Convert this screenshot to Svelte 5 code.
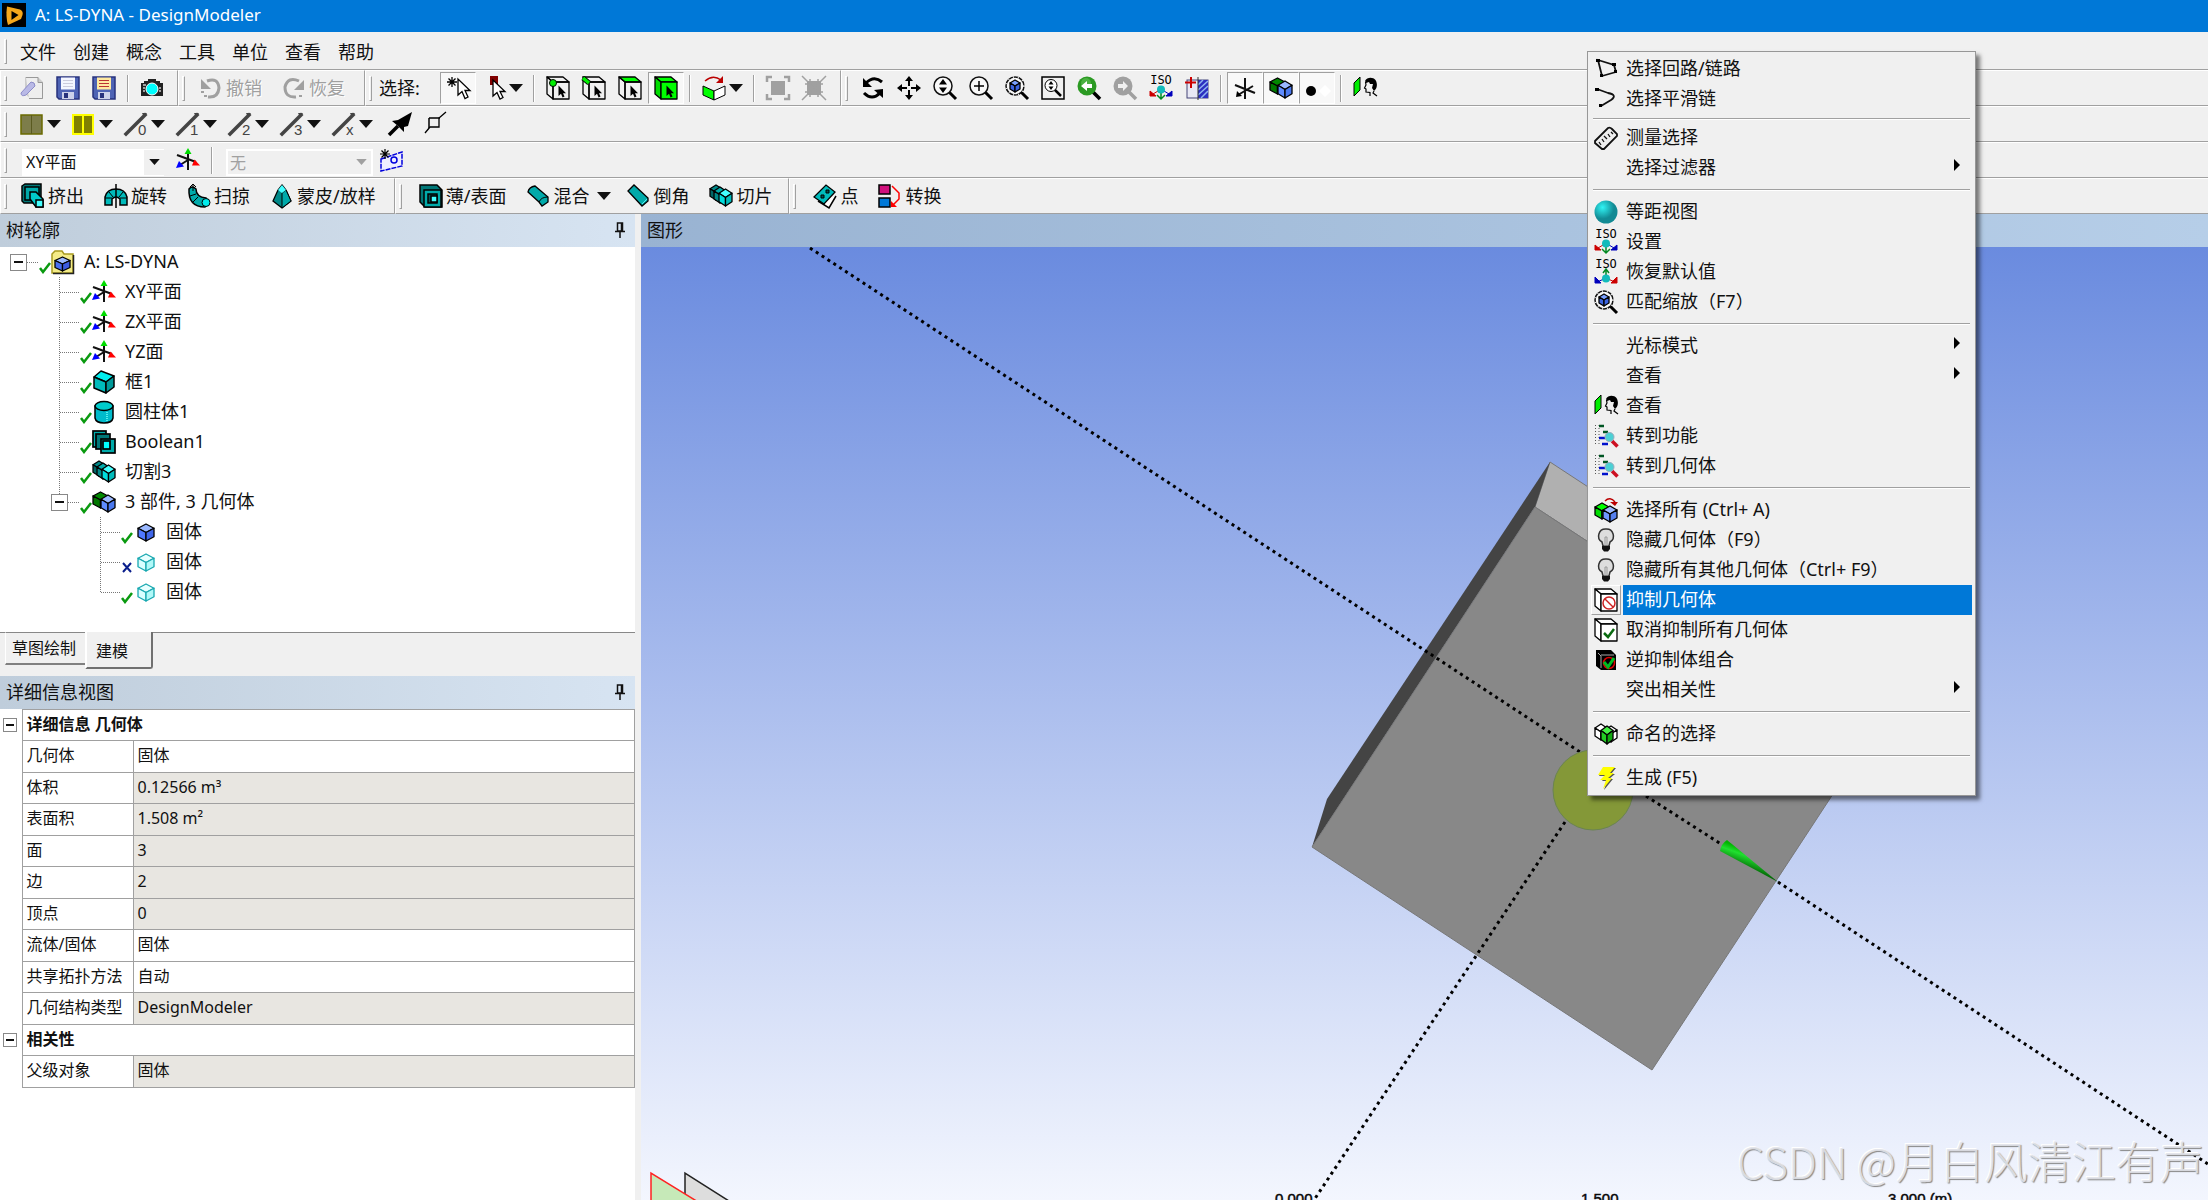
<script lang="ts">
  type Tool = { t: string; icon?: string; text?: string; on?: boolean; off?: boolean; n?: number; tip?: string }

  /** svg helpers */
  const cube = (x: number, y: number, w: number, h: number, top: string, left: string, right: string, line = '#000', sw = 1.3) => {
    const m = x + w / 2, r = x + w, a = y + h / 4, b = y + (h * 3) / 4, c = y + h / 2
    return `<g stroke="${line}" stroke-width="${sw}" stroke-linejoin="round">
      <path d="M${m} ${y}L${r} ${a}L${m} ${c}L${x} ${a}Z" fill="${top}"/>
      <path d="M${x} ${a}L${m} ${c}V${y + h}L${x} ${b}Z" fill="${left}"/>
      <path d="M${r} ${a}L${m} ${c}V${y + h}L${r} ${b}Z" fill="${right}"/></g>`
  }
  const box = (top: string, side: string, front: string) => `<g stroke="#000" stroke-width="1.300" stroke-linejoin="round">
    <path d="M1 1H17L23 6H7Z" fill="${top}"/><path d="M1 1L7 6V23L1 18Z" fill="${side}"/>
    <path d="M7 6H23V23H7Z" fill="${front}"/></g>`
  const cursor = '<path d="M12.500 9.500V20L15 17.800L16.600 21.500L18.500 20.600L17 17.200H20Z"/>'
  const lens = '<circle cx="10" cy="10" r="9" fill="#fff" fill-opacity=".6" stroke="#111" stroke-width="1.500"/><path d="M16.500 16.500L23 23" stroke="#000" stroke-width="3"/>'
  const axes = `<path d="M1 7L20 14M12 5V22M12 12L4 17" stroke="#111" stroke-width="2"/>
    <path d="M12 0L15.500 6H8.500Z" fill="#0d0"/><path d="M24 17.500H16L18.500 11.500Z" fill="#f00"/><path d="M0 20L3 13L8 18.500Z" fill="#00f"/>`
  const floppy = (line: string, paper: string) => `<path d="M1 1H23V23H3L1 21Z" fill="#4e63b4" stroke="#27327c" stroke-width="1.500"/>
    <rect x="5" y="1.500" width="14" height="12" fill="${paper}"/><path d="M7 4.500H17M7 7.500H17M7 10.500H17" stroke="${line}"/>
    <rect x="6" y="16" width="12" height="7" fill="#ccd2ea"/><rect x="8" y="17" width="4" height="5" fill="#27327c"/>`
  const slash = (n: string) => `<path d="M2 22L21 3" stroke="#444" stroke-width="3.500" stroke-linecap="square"/><path d="M18 1H23L20 5Z" fill="#444"/>
    <text x="14" y="23" font-size="15" font-family="Liberation Sans" fill="#444">${n}</text>`
  const iso = (up: boolean) => `<text x="12" y="8" font-size="12" text-anchor="middle" font-family="DejaVu Sans Mono">ISO</text>` + (up
    ? `<path d="M12 19V10M9 13L12 9L15 13" stroke="#082" stroke-width="1.500" fill="none"/><path d="M10 19L3 22M1 17V23H7Z" stroke="#00b" fill="#00b"/><path d="M14 19L21 22M23 17V23H17Z" stroke="#c00" fill="#c00"/><circle cx="12" cy="18.500" r="4" fill="#1bb"/>`
    : `<path d="M12 15V23M8 19L12 23L16 19" stroke="#082" stroke-width="1.500" fill="none"/><path d="M9 15L4 18M1 15V20H7Z" stroke="#c00" fill="#c00"/><path d="M15 15L20 18M23 15V20H17Z" stroke="#00b" fill="#00b"/><circle cx="12" cy="13.500" r="4" fill="#1bb"/>`)
  const head = `<path d="M1 7L7 1V14L1 20Z" fill="#0e0" stroke="#000"/>
    <path d="M12 5C14 1 20 1 22.500 4C25 8 24 13 21 15L19 12L20 8L17 8L16 6L13 7Z"/>
    <path d="M12.500 6L13 9L11.500 12L13 13V16L17 16.500V20M21 15L20 17L24 20" fill="none" stroke="#000" stroke-width="1.200"/>`
  const bulb = `<path d="M12 1A7 7 0 0 0 8 14L9 18H15L16 14A7 7 0 0 0 12 1Z" fill="#ddd" stroke="#333" stroke-width="1.500"/>
    <path d="M11 18V9H13V18" fill="none" stroke="#999"/><path d="M8 18H16V21L14 23.500H10L8 21Z" fill="#111"/>`
  const goTo = `<path d="M1.500 1V22M5 1V22" stroke="#555" stroke-dasharray="1 2"/><path d="M5 2H10M9 8H14" stroke="#052" stroke-width="2.500"/>
    <path d="M5 14H11M8 20H14" stroke="#01c" stroke-width="2.500"/><path d="M18 17L23.500 22.500" stroke="#c12" stroke-width="3.500"/><circle cx="15.500" cy="13" r="4.500" fill="#4cd0d4" stroke="#9ab"/>`
  const slices = cube(1, 1, 12, 15, '#088', '#066', '#066') + cube(5, 3, 12, 16, '#0aa', '#088', '#088') + cube(10, 5, 13, 17, '#4ff', '#0dd', '#0bb')

  const icons: Record<string, string> = {
    app: '<rect width="24" height="24"/><path d="M5 3.500L18 6.500Q21.500 8 20.500 12L19 16L6 22Q3.500 14 5 3.500Z" fill="#f5a81c"/><path d="M9.500 8L16.500 12L9.500 17Z" fill="#000"/>',
    fresh: '<path d="M5 1H18L23 6V23H11L5 18Z" fill="#ccc"/><path d="M6 1.500H18V6.500H22.500V22.500H9" fill="#eee" stroke="#999"/><path d="M1 17L11 6Q15 6 15 10L6 19Q1 21 1 17Z" fill="#b9b9e6" stroke="#8c8cc8"/>',
    save: floppy('#ccd', '#f4f6ff'),
    saveAll: floppy('#b33', '#ffe9a0'),
    camera: '<path d="M4 5H8V3H16V5H20V7H23V20H1V7H4Z" fill="#222"/><path d="M3 9H6M3 12H5M3 15H5M19 12H21M19 15H21" stroke="#ccc" stroke-width="1.500"/><circle cx="12" cy="13" r="6" fill="#0ff" stroke="#fff"/>',
    undo: '<path d="M8 5Q19 1 20 12Q19 22 9 21" fill="none" stroke="#a0a0a0" stroke-width="3"/><path d="M2 3V13H12Z" fill="#a0a0a0"/><path d="M2 16H5M5 20H8" stroke="#a0a0a0" stroke-width="2"/>',
    redo: '<path d="M17 5Q6 0 3 11Q3 22 14 21" fill="none" stroke="#a0a0a0" stroke-width="3"/><path d="M22 4V14H12Z" fill="#a0a0a0"/><path d="M17 20H20" stroke="#a0a0a0" stroke-width="2"/>',
    pick: '<path d="M6 1V11M1 6H11M2.500 2.500L9.500 9.500M9.500 2.500L2.500 9.500" stroke="#000" stroke-width="1.300"/><path d="M12 3V19L16 15.500L19 22.500L22 21L19 14.500H24Z" fill="#fff" stroke="#000" stroke-width="1.300"/>',
    pickMode: '<rect x="8" y="0" width="8" height="9" fill="#800000"/><path d="M11 4V20L15 16.500L18 23L21 21.500L18 15.500H23Z" fill="#fff" stroke="#000" stroke-width="1.300"/>',
    vertex: box('none', 'none', 'none') + '<circle cx="7" cy="7" r="3.500" fill="#0e0" stroke="#000"/>' + cursor,
    edge: box('none', 'none', 'none') + '<path d="M1 2L7 7" stroke="#000" stroke-width="5"/><path d="M1 2L7 7" stroke="#0e0" stroke-width="3.500"/>' + cursor,
    face: box('#0f0', 'none', 'none') + cursor,
    body: box('#0f0', '#0d0', '#0f0') + cursor,
    extend: '<path d="M3 5Q11 -2 19 4" fill="none" stroke="#b00" stroke-width="1.500"/><path d="M21 0V7H14Z" fill="#b00"/><path d="M1 10L12 15V24L1 19Z" fill="#0f0" stroke="#000"/><path d="M23 10L12 15V24L23 19Z" fill="#fff" stroke="#000"/>',
    grow: '<rect x="5" y="5" width="14" height="14" fill="#a0a0a0"/><path d="M1 6V1H6M18 1H23V6M23 18V23H18M6 23H1V18" fill="none" stroke="#a0a0a0" stroke-width="2.500"/>',
    shrink: '<rect x="5" y="5" width="14" height="14" fill="#a0a0a0"/><path d="M0 0L24 24M24 0L0 24M8 3V21M16 3V21M3 8H21M3 16H21" stroke="#a0a0a0" stroke-width="1.500"/>',
    rotate: '<path d="M5 7Q13 -1 21 6M3 17Q11 25 19 17" fill="none" stroke="#000" stroke-width="3"/><path d="M2 2V11H11Z"/><path d="M22 13V22L13 14Z"/>',
    pan: '<path d="M12 3V10M12 14V21M3 12H10M14 12H21" stroke="#000" stroke-width="2"/><path d="M12 0L16 5H8ZM12 24L16 19H8ZM0 12L5 8V16ZM24 12L19 8V16Z"/>',
    zoom: lens + '<path d="M10 3L14 8.500H6ZM10 17L14 11.500H6Z"/>',
    zoomIn: lens + '<path d="M10 5V15M5 10H15" stroke="#000" stroke-width="1.500"/>',
    fit: lens + '<circle cx="10" cy="10" r="9" fill="none" stroke="#f0f0f0" stroke-width="1.500" stroke-dasharray="1 4"/>' + cube(5, 4, 10, 12, '#7aa0ff', '#3c64e0', '#3c64e0'),
    zoomBox: '<rect x="1" y="1" width="22" height="22" fill="none" stroke="#000" stroke-width="1.500"/><circle cx="10" cy="9.500" r="6" fill="#fff" stroke="#000"/><path d="M14 14L20 20" stroke="#000" stroke-width="2.500"/><path d="M10 5L12.500 8.500H7.500ZM10 14L12.500 10.500H7.500Z"/>',
    prev: '<path d="M16 16L23 23" stroke="#000" stroke-width="3.500"/><circle cx="10" cy="10" r="9.500" fill="#2b9a22"/><circle cx="9" cy="7" r="5" fill="#6cc860" fill-opacity=".5"/><path d="M15 8H10V5L4 10L10 15V12H15Z" fill="#fff"/>',
    next: '<circle cx="10" cy="10" r="9.500" fill="#a0a0a0"/><path d="M16 16L23 23" stroke="#a0a0a0" stroke-width="3.500"/><path d="M5 8H10V5L15 10L10 15V12H5Z" fill="#f0f0f0"/>',
    iso: iso(false),
    isoUp: iso(true),
    plane: '<rect x="2" y="4" width="21" height="18" fill="#e8e8f4" stroke="#447"/><path d="M13 4H23V22H13Z" fill="#2c30c0"/><path d="M13 9L18 4M13 14L23 5M13 19L23 10M16 22L23 15" stroke="#8fb4f0" stroke-width="1.500"/><path d="M13 1V24" stroke="#333"/><path d="M6 1V12M0 6.500H11" stroke="#c00" stroke-width="2"/>',
    triad: '<path d="M2 9L22 17M12 2V23M20 10L5 19" stroke="#111" stroke-width="2"/><path d="M3 21L4 15L9 20Z"/>',
    parts: cube(1, 2, 15, 16, '#080', '#070', '#060') + cube(9, 5, 14, 17, '#9ab8ff', '#5f8cff', '#4a78ee'),
    dots: '<circle cx="6" cy="15" r="5"/><path d="M20 9L26 15L20 21L14 15Z" fill="#fff"/>',
    look: head,
    plates: '<rect x="1" y="3" width="21" height="19" fill="#7d7d4a" stroke="#6a6a00" stroke-width="1.500"/><path d="M11.500 3V22" stroke="#5a5a20"/>',
    platesLit: '<rect x="1" y="3" width="20" height="19" fill="#808000" stroke="#ff0" stroke-width="2"/><path d="M11 3V22" stroke="#ff0" stroke-width="2"/>',
    l0: slash('0'), l1: slash('1'), l2: slash('2'), l3: slash('3'), lx: slash('x'),
    spear: '<path d="M1 23L10 14" stroke="#000" stroke-width="3.500"/><path d="M24 0L20 14L16 15L16 20L10 14L4 9L10 8Z"/>',
    tag: '<path d="M1 21L6 15H15V6L22 0" fill="none" stroke="#000" stroke-width="1.300"/><path d="M5 6H16M5 6V16" stroke="#000" stroke-width="1.500"/>',
    axes,
    sketch: '<path d="M2 11L23 4V18L2 23Z" fill="#eef" stroke="#00d" stroke-width="1.500" stroke-dasharray="5 1"/><circle cx="15" cy="12" r="3" fill="none" stroke="#00d" stroke-width="1.500"/><path d="M6 1V11M1 6H11M2.500 2.500L9.500 9.500M9.500 2.500L2.500 9.500" stroke="#000" stroke-width="1.200"/>',
    extrude: '<g stroke="#000" stroke-width="1.500"><path d="M1 2L4 0H20V16L17 19H3L1 17Z" fill="#077"/><rect x="4" y="3" width="14" height="13" fill="#0aa"/><path d="M9 8H15L22 15V23H15L9 15Z" fill="#0cc"/><rect x="15" y="16" width="7" height="7" fill="#4ff"/></g>',
    revolve: '<path d="M1 21V13Q3 5 12 5Q21 5 23 13V21H16V15Q12 11 8 15V21Z" fill="#0bb" stroke="#000" stroke-width="1.500"/><path d="M1 14H8M16 14H23M5 8L9 13M19 8L15 13" stroke="#000"/><path d="M12 0V24" stroke="#000" stroke-width="1.500"/>',
    sweep: '<path d="M2 5Q5 1 9 5Q9 13 19 14L22 18L18 23Q1 23 2 5Z" fill="#0aa" stroke="#000" stroke-width="1.500"/><path d="M3 12L9 10M6 18L11 13" stroke="#000"/><circle cx="19" cy="18.500" r="4" fill="#0ee" stroke="#000"/><path d="M6 0V7M3 3L6 0L9 3" fill="none" stroke="#000"/>',
    loft: '<path d="M12 1L16 6L21 17L12 24L3 17L8 6Z" fill="#088" stroke="#000" stroke-width="1.300"/><path d="M12 9V24L21 17L16 6Z" fill="#0aa" stroke="#000"/><path d="M12 1L16 6L12 9L8 6Z" fill="#4ff"/>',
    thin: '<g stroke="#000" stroke-width="1.500"><path d="M1 1H18L23 6V23H6L1 18Z" fill="#077"/><rect x="5" y="6" width="17" height="17" fill="#0aa"/><rect x="9" y="10" width="9" height="9" fill="#055"/><rect x="12" y="12" width="6" height="6" fill="#4ff"/></g>',
    blend: '<path d="M2 8Q3 3 9 2L22 13V18L16 22L13 18Z" fill="#0aa" stroke="#000" stroke-width="1.300"/><path d="M13 18Q15 13 22 13" stroke="#000" fill="none"/>',
    chamfer: '<path d="M2 7L8 1L22 14V17L16 22Z" fill="#0aa" stroke="#000" stroke-width="1.300"/><path d="M16 20L21 15" stroke="#5ee"/>',
    slices,
    point: '<path d="M5 17L16 24L23 12" fill="#fff" stroke="#000" stroke-width="1.500"/><path d="M1 13L13 1L22 8L11 20Z" fill="#0bb" stroke="#000" stroke-width="1.300"/><path d="M8 11H11V14H8ZM13 6H16V9H13Z" fill="#055" stroke="#000"/>',
    convert: '<rect x="1" y="1" width="11" height="9" fill="#d0107c" stroke="#000" stroke-width="1.500"/><rect x="1" y="14" width="11" height="9" fill="#0078d7" stroke="#000" stroke-width="1.500"/><path d="M14 2L21 9V15L15 21" fill="none" stroke="#f00" stroke-width="1.500"/><path d="M13 17V23H19Z" fill="#f00"/>',
    folder: '<path d="M1 4L4 1H11L13 4H22V23H1Z" fill="#f4ec88" stroke="#a89a20" stroke-width="1.500"/><path d="M22.500 5V23.500H2" fill="none" stroke="#222" stroke-width="1.500"/>' + cube(4, 7, 15, 14, '#9ab8ff', '#4a70f0', '#3c5ce0'),
    block: '<g stroke="#000" stroke-width="1.500" stroke-linejoin="round"><path d="M2 7L9 1L22 6L14 12Z" fill="#0ee"/><path d="M2 7L14 12V23L2 18Z" fill="#0bb"/><path d="M14 12L22 6V17L14 23Z" fill="#099"/></g>',
    cylinder: '<path d="M3 6V18Q4 23 12 23Q20 23 21 18V6Z" fill="#0bc" stroke="#000" stroke-width="1.500"/><ellipse cx="12" cy="6" rx="9" ry="4.500" fill="#0cc" stroke="#000" stroke-width="1.500"/><path d="M15 12V21" stroke="#5ee" stroke-width="2" stroke-dasharray="1 1"/>',
    bool: '<g stroke="#000" stroke-width="1.700"><rect x="1" y="1" width="13" height="16" fill="#0aa"/><rect x="4" y="4" width="14" height="15" fill="#077"/><rect x="9" y="9" width="14" height="14" fill="#0aa"/><rect x="11" y="11" width="7" height="8" fill="#0ff"/></g>',
    solid: cube(5, 4, 16, 17, '#9ab8ff', '#5078ff', '#4066e8'),
    ghost: cube(5, 4, 16, 17, '#e8ffff', '#d8ffff', '#b0f8f8', '#18a8b0'),
    loop: '<path d="M4 3L20 8L22 15L8 19Z" fill="none" stroke="#111" stroke-width="1.800"/><path d="M2 2H6V5H2ZM18 6H22V9H18ZM20 13H23V16H20ZM6 17H9V20H6Z"/>',
    chain: '<path d="M3 2L14 6Q24 8 17 13L7 19" fill="none" stroke="#111" stroke-width="1.800"/><path d="M1 1H5V4H1ZM5 17H8V20H5Z"/>',
    ruler: '<path d="M1 15L14 2Q16 1 18 3L23 8V10L10 23H8L1 17Z" fill="#eee" stroke="#111" stroke-width="1.800"/><path d="M7 19L5 16M10 16L8 13M13 13L10 10M16 11L14 8M19 8L17 6" stroke="#111" stroke-width="1.300"/>',
    sphere: '<defs><radialGradient id="ball" cx="35%" cy="30%"><stop offset="0" stop-color="#30f4f4"/><stop offset="1" stop-color="#128a94"/></radialGradient></defs><circle cx="12" cy="12" r="11.500" fill="url(#ball)"/>',
    goTo,
    all: cube(1, 5, 14, 16, '#0f0', '#0d0', '#0b0') + cube(9, 8, 14, 16, '#9ab8ff', '#6f98ff', '#5580f0') + '<path d="M11 3Q16 -2 21 4" fill="none" stroke="#b00" stroke-width="1.500"/><path d="M16 4H24L21 8Z" fill="#b00"/>',
    bulb,
    suppress: box('#fff', '#fff', '#fff') + '<circle cx="15" cy="15" r="6" fill="none" stroke="#c22" stroke-width="1.500"/><path d="M11 11L19 19" stroke="#c22" stroke-width="1.500"/>',
    unsuppress: box('#fff', '#fff', '#fff') + '<path d="M10 15L14 19L20 11" fill="none" stroke="#0a6a10" stroke-width="2.500"/>',
    invert: '<path d="M2 2H17L22 7V22H7L2 18Z"/><path d="M4 5L7 8V20M7 7H20" stroke="#aaa" fill="none"/><circle cx="15" cy="15" r="5.500" fill="none" stroke="#d00" stroke-width="1.500"/><path d="M10 14L14 19L20 10" fill="none" stroke="#0b2" stroke-width="3"/>',
    named: cube(1, 2, 12, 16, '#fff', '#fff', '#fff') + cube(11, 4, 12, 16, '#fff', '#fff', '#fff') + cube(7, 4, 12, 18, '#4e4', '#2c2', '#1a1'),
    bolt: '<path d="M10 2H22L17 8H21L15 13H19L10 24L13 15H8L12 10H5Z" fill="#555"/><path d="M9 1H21L16 7H20L14 12H18L9 23L12 14H6L11 9H4Z" fill="#ff0"/>'
  }

  /** toolbars: rows of bands, each band a list of tools */
  const b = (icon: string, tip: string, on = false): Tool => ({ t: 'btn', icon, tip, on })
  const d = (icon: string, tip: string): Tool => ({ t: 'drop', icon, tip })
  const x = (icon: string, text: string, off = false): Tool => ({ t: 'text', icon, text, off })
  const gap = (n: number): Tool => ({ t: 'gap', n })
  const sep: Tool = { t: 'sep' }

  const menus = ['文件', '创建', '概念', '工具', '单位', '查看', '帮助']
  const mainBands: Tool[][] = [
    [b('fresh', '新建'), b('save', '保存'), b('saveAll', '另存'), sep, b('camera', '图像'), gap(7)],
    [x('undo', '撤销', true), x('redo', '恢复', true), gap(6)],
    [{ t: 'label', text: '选择:' }, b('pick', '新选择', true), d('pickMode', '选择模式'), sep, b('vertex', '点'), b('edge', '边'), b('face', '面'), b('body', '体', true), sep,
      d('extend', '扩展'), sep, b('grow', '放大选择'), b('shrink', '缩小选择'), gap(8)],
    [b('rotate', '旋转'), b('pan', '平移'), b('zoom', '缩放'), b('zoomIn', '放大'), b('fit', '匹配'), b('zoomBox', '窗口'), b('prev', '上一视图'), b('next', '下一视图'), b('iso', '等距'), b('plane', '平面'), sep,
      b('triad', '坐标', true), b('parts', '模型', true), b('dots', '点显示', true), sep, b('look', '查看')]
  ]
  const lineBands: Tool[][] = [
    [d('plates', '面颜色'), d('platesLit', '高亮'), d('l0', '边 0'), d('l1', '边 1'), d('l2', '边 2'), d('l3', '边 3'), d('lx', '边 x'), gap(4), b('spear', '方向'), b('tag', '标记')]
  ]
  const featureBands: Tool[][] = [
    [x('extrude', '挤出'), x('revolve', '旋转'), x('sweep', '扫掠'), x('loft', '蒙皮/放样'), gap(5)],
    [gap(3), x('thin', '薄/表面'), { t: 'textdrop', icon: 'blend', text: '混合' }, x('chamfer', '倒角'), x('slices', '切片'), gap(3)],
    [gap(3), x('point', '点'), x('convert', '转换')]
  ]

  const tree = [
    { level: 0, icon: 'folder', text: 'A: LS-DYNA', open: true },
    { level: 1, icon: 'axes', text: 'XY平面' },
    { level: 1, icon: 'axes', text: 'ZX平面' },
    { level: 1, icon: 'axes', text: 'YZ面' },
    { level: 1, icon: 'block', text: '框1' },
    { level: 1, icon: 'cylinder', text: '圆柱体1' },
    { level: 1, icon: 'bool', text: 'Boolean1' },
    { level: 1, icon: 'slices', text: '切割3' },
    { level: 1, icon: 'parts', text: '3 部件, 3 几何体', open: true },
    { level: 2, icon: 'solid', text: '固体' },
    { level: 2, icon: 'ghost', text: '固体', hidden: true },
    { level: 2, icon: 'ghost', text: '固体', last: true }
  ]

  const details = [
    { group: '详细信息 几何体' },
    { name: '几何体', value: '固体', edit: true },
    { name: '体积', value: '0.12566 m³' },
    { name: '表面积', value: '1.508 m²' },
    { name: '面', value: '3' },
    { name: '边', value: '2' },
    { name: '顶点', value: '0' },
    { name: '流体/固体', value: '固体', edit: true },
    { name: '共享拓扑方法', value: '自动', edit: true },
    { name: '几何结构类型', value: 'DesignModeler' },
    { group: '相关性' },
    { name: '父级对象', value: '固体' }
  ]

  const context = [
    [{ icon: 'loop', text: '选择回路/链路' }, { icon: 'chain', text: '选择平滑链' }],
    [{ icon: 'ruler', text: '测量选择' }, { text: '选择过滤器', sub: true }],
    [{ icon: 'sphere', text: '等距视图' }, { icon: 'iso', text: '设置' }, { icon: 'isoUp', text: '恢复默认值' }, { icon: 'fit', text: '匹配缩放（F7）' }],
    [{ text: '光标模式', sub: true }, { text: '查看', sub: true }, { icon: 'look', text: '查看' }, { icon: 'goTo', text: '转到功能' }, { icon: 'goTo', text: '转到几何体' }],
    [{ icon: 'all', text: '选择所有 (Ctrl+ A)' }, { icon: 'bulb', text: '隐藏几何体（F9）' }, { icon: 'bulb', text: '隐藏所有其他几何体（Ctrl+ F9）' },
      { icon: 'suppress', text: '抑制几何体', hot: true }, { icon: 'unsuppress', text: '取消抑制所有几何体' }, { icon: 'invert', text: '逆抑制体组合' }, { text: '突出相关性', sub: true }],
    [{ icon: 'named', text: '命名的选择' }],
    [{ icon: 'bolt', text: '生成 (F5)' }]
  ] as { icon?: string; text: string; sub?: boolean; hot?: boolean }[][]
</script>

{#snippet ico(name: string)}
  <svg class="ico" viewBox="0 0 24 24" aria-hidden="true">{@html icons[name] ?? ''}</svg>
{/snippet}

{#snippet tri()}
  <svg class="tri" viewBox="0 0 14 8" aria-hidden="true"><path d="M0 0H14L7 8Z" fill="currentColor" /></svg>
{/snippet}

{#snippet pin()}
  <svg class="pin" viewBox="0 0 10 16" aria-hidden="true"><path d="M2.500 1H7.500V9H2.500ZM0 9.500H10M5 9V16M6.500 1V9" fill="none" stroke="#111" stroke-width="1.500" /></svg>
{/snippet}

{#snippet bar(bands: Tool[][])}
  <div class="row">
    {#each bands as tools, i}
      <div class="band" class:rest={i === bands.length - 1}>
        <span class="grip"></span>
        {#each tools as tool}
          {#if tool.t === 'sep'}
            <span class="sep"></span>
          {:else if tool.t === 'gap'}
            <span style="width:{tool.n}px"></span>
          {:else if tool.t === 'label'}
            <span class="label">{tool.text}</span>
          {:else if tool.t === 'btn'}
            <button class="btn" class:on={tool.on} aria-label={tool.tip}>{@render ico(tool.icon ?? '')}</button>
          {:else if tool.t === 'drop'}
            <button class="drop" aria-label={tool.tip}>{@render ico(tool.icon ?? '')}{@render tri()}</button>
          {:else}
            <button class="text" class:wide={tool.t === 'textdrop'} class:off={tool.off}>
              {@render ico(tool.icon ?? '')}<span>{tool.text}</span>
              {#if tool.t === 'textdrop'}{@render tri()}{/if}
            </button>
          {/if}
        {/each}
      </div>
    {/each}
  </div>
{/snippet}

<div class="app">
  <header class="title">{@render ico('app')}<span>A: LS-DYNA - DesignModeler</span></header>

  <nav class="row menubar">
    <span class="grip"></span>
    {#each menus as m}<button>{m}</button>{/each}
  </nav>
  {@render bar(mainBands)}
  {@render bar(lineBands)}
  <div class="row">
    <div class="band rest">
      <span class="grip"></span>
      <span class="combo plane">
        <select aria-label="平面"><option>XY平面</option></select>
        <span class="arrow">{@render tri()}</span>
      </span>
      <button class="btn" aria-label="新平面">{@render ico('axes')}</button>
      <span class="sep"></span>
      <span class="combo none">
        <select aria-label="草图" disabled><option>无</option></select>
        <span class="arrow">{@render tri()}</span>
      </span>
      <button class="btn" aria-label="新草图">{@render ico('sketch')}</button>
    </div>
  </div>
  {@render bar(featureBands)}

  <main>
    <aside>
      <h2>树轮廓{@render pin()}</h2>
      <ul class="tree">
        {#each tree as node}
          <li class="level{node.level}">
            <span class="stem">
              <svg viewBox="0 0 29 30" aria-hidden="true">
                <g stroke="#777" stroke-dasharray="1 1">
                  {#if node.level > 0}<path d="M8.500 0V{node.last || node.open ? 15 : 30}" />{/if}
                  <path d="M9 15.500H29" />
                </g>
              </svg>
              {#if node.open}<button class="fold" aria-label="折叠"></button>{/if}
            </span>
            <svg class="mark" viewBox="0 0 12 12" aria-hidden="true">
              {#if node.hidden}
                <path d="M2 1L10 10M10 1L2 10" stroke="#0a1e8c" stroke-width="2" />
              {:else}
                <path d="M1 6L4 10L11 1" fill="none" stroke="#0a9a10" stroke-width="2.500" />
              {/if}
            </svg>
            {@render ico(node.icon)}
            <span class="name">{node.text}</span>
          </li>
        {/each}
      </ul>
      <div class="tabs">
        <button class="back">草图绘制</button>
        <button class="front">建模</button>
        <span></span>
      </div>
      <h2>详细信息视图{@render pin()}</h2>
      <div class="details">
        <table>
          <colgroup><col class="c-fold" /><col class="c-name" /><col /></colgroup>
          <tbody>
            {#each details as item}
              <tr>
                {#if item.group}
                  <td class="gutter"><button class="fold" aria-label="折叠"></button></td>
                  <th colspan="2" class="group">{item.group}</th>
                {:else}
                  <td class="gutter"></td>
                  <th>{item.name}</th>
                  <td class:fixed={!item.edit}>{item.value}</td>
                {/if}
              </tr>
            {/each}
          </tbody>
        </table>
      </div>
    </aside>

    <section class="graphics">
      <h2>图形</h2>
      <div class="view">
        <svg class="scene" viewBox="0 0 1567 953" preserveAspectRatio="xMidYMid slice">
          <defs>
            <linearGradient id="cone" x1="0.6" y1="0.3" x2="0.4" y2="0.7">
              <stop offset="0" stop-color="#00b400" />
              <stop offset="0.3" stop-color="#20e030" />
              <stop offset="1" stop-color="#005a00" />
            </linearGradient>
          </defs>
          <!-- box -->
          <path d="M909 215L1248 437L1234 483L894 260Z" fill="#b0b0b0" stroke="#777" />
          <path d="M909 215L894 260L671 600L686 552Z" fill="#444" />
          <path d="M894 260L1234 483L1011 823L671 600Z" fill="#888" stroke="#777" />
          <!-- axes -->
          <path class="axis" d="M169 1L939 505M1005 549L1080 597M1137 635L1567 917" />
          <path class="axis" d="M924 575L673 953" />
          <circle cx="952" cy="543" r="40" fill="#849838" stroke="#6b8450" />
          <path d="M1086 593L1137 635L1079 604Q1080 597 1086 593Z" fill="url(#cone)" />
          <!-- section planes -->
          <path d="M44 960V926L110 968" fill="#ddd" stroke="#222" stroke-width="1.500" />
          <path d="M10 960V926L75 966" fill="#c6e9b8" stroke="#f22" stroke-width="1.500" />
          <g class="scale">
            <text x="634" y="957">0.000</text>
            <text x="940" y="957">1.500</text>
            <text x="1247" y="957">3.000 (m)</text>
          </g>
        </svg>
        <div class="watermark"><span>CSDN @</span>月白风清江有声</div>
      </div>
    </section>
  </main>

  <div class="context">
    {#each context as group, g}
      {#if g > 0}<hr class:tight={g === 1} />{/if}
      {#each group as item}
        <button class:hot={item.hot}>
          <span class="cell">{#if item.icon}{@render ico(item.icon)}{/if}</span>
          <span class="caption">{item.text}</span>
          {#if item.sub}<svg class="more" viewBox="0 0 7 18" aria-hidden="true"><path d="M0 0L6 6L0 12Z" /></svg>{/if}
        </button>
      {/each}
    {/each}
  </div>
</div>

<style>
  :global(body) {
    margin: 0;
    background: #f0f0f0;
  }
  .app {
    position: relative;
    display: flex;
    flex-direction: column;
    min-height: 100vh;
    overflow: hidden;
    background: #f0f0f0;
    color: #111;
    font: 18px/24px 'Noto Sans', 'Noto Sans CJK SC', sans-serif;
  }
  button, select {
    margin: 0;
    padding: 0;
    border: 0;
    border-radius: 0;
    background: none;
    color: inherit;
    font: inherit;
  }
  .ico {
    display: block;
    flex: none;
    width: 24px;
    height: 24px;
    overflow: visible;
  }
  .title {
    display: flex;
    align-items: center;
    gap: 9px;
    height: 32px;
    padding: 0 0 3px 2px;
    box-sizing: border-box;
    background: #0078d7;
    color: #fff;
    font-size: 17px;
  }

  /* toolbars */
  .row {
    display: flex;
    height: 36px;
    white-space: nowrap;
  }
  .band {
    display: flex;
    align-items: center;
    box-sizing: border-box;
    border: 1px solid #fff;
    border-right-color: #a0a0a0;
    border-bottom-color: #a0a0a0;
  }
  .rest {
    flex: 1;
    border-right: 0;
  }
  .grip {
    flex: none;
    width: 3px;
    height: 25px;
    margin: 0 7px 0 3px;
    box-sizing: border-box;
    border: 1px solid #a0a0a0;
    border-top-color: #fff;
    border-left-color: #fff;
  }
  .menubar {
    align-items: center;
    height: 38px;
    box-sizing: border-box;
    border-bottom: 1px solid #a0a0a0;
    padding: 2px 0 0 1px;
  }
  .menubar button {
    margin-left: 6px;
    margin-right: 11px;
  }
  .btn {
    display: flex;
    align-items: center;
    justify-content: center;
    width: 36px;
    height: 32px;
    box-sizing: border-box;
    border: 1px solid transparent;
  }
  .btn.on {
    background: #f8f8f8;
    border-color: #a0a0a0 #fff #fff #a0a0a0;
  }
  .drop {
    display: flex;
    align-items: center;
    gap: 3px;
    width: 52px;
    padding-left: 6px;
  }
  .tri {
    display: block;
    width: 14px;
    height: 8px;
  }
  .text {
    display: flex;
    align-items: center;
    gap: 3px;
    padding: 0 13px 0 7px;
  }
  .text.off {
    color: #a0a0a0;
    text-shadow: 1px 1px 0 #fff;
  }
  .text.wide {
    padding-right: 8px;
  }
  .text .tri {
    margin-left: 5px;
  }
  .label {
    width: 61px;
  }
  .sep {
    width: 12px;
    height: 27px;
    background: linear-gradient(90deg, transparent 5px, #a0a0a0 5px, #a0a0a0 6px, #fff 6px, #fff 7px, transparent 7px);
  }
  .combo {
    display: grid;
    height: 27px;
    margin: 4px 0 0 8px;
  }
  .combo select {
    grid-area: 1 / 1;
    appearance: none;
    height: 27px;
    padding: 0 4px;
    background: #fff;
    font-size: 16px;
    opacity: 1;
  }
  .combo.plane {
    width: 142px;
    margin-right: 6px;
  }
  .combo.none {
    width: 147px;
    color: #a0a0a0;
  }
  .combo.none select {
    border: 2px solid #fff;
    padding: 0 2px;
    background: #f0f0f0;
  }
  .arrow {
    grid-area: 1 / 1;
    place-self: center end;
    display: grid;
    place-items: center;
    width: 20px;
    height: 25px;
    background: #f0f0f0;
    pointer-events: none;
  }
  .none .arrow {
    width: 24px;
    background: none;
  }
  .arrow .tri {
    width: 11px;
    height: 6px;
  }

  /* panels */
  main {
    display: flex;
    flex: 1;
  }
  aside {
    display: flex;
    flex-direction: column;
    flex: none;
    width: 635px;
    margin-right: 6px;
  }
  h2 {
    display: flex;
    align-items: center;
    justify-content: space-between;
    height: 33px;
    box-sizing: border-box;
    margin: 0;
    padding: 0 10px 2px 6px;
    background: linear-gradient(90deg, #bfcddb, #d7e4f2);
    font-size: 18px;
    font-weight: normal;
  }
  .pin {
    width: 10px;
    height: 16px;
  }
  .tree {
    height: 385px;
    margin: 0;
    padding: 0;
    background: #fff;
    list-style: none;
  }
  .tree li {
    display: flex;
    align-items: center;
    height: 30px;
    padding-left: 10px;
  }
  .tree .level1 {
    padding-left: 51px;
  }
  .tree .level2 {
    padding-left: 92px;
  }
  .stem {
    display: grid;
    align-items: center;
    width: 29px;
    height: 30px;
  }
  .stem > * {
    grid-area: 1 / 1;
  }
  .stem svg {
    display: block;
    width: 29px;
    height: 30px;
  }
  .fold {
    width: 17px;
    height: 17px;
    border: 1px solid #888;
    background: linear-gradient(#111, #111) center / 9px 2px no-repeat #fff;
  }
  .mark {
    width: 12px;
    height: 12px;
    margin-top: 12px;
  }
  .name {
    margin-left: 9px;
    padding-bottom: 3px;
  }
  .tabs {
    display: flex;
    align-items: flex-start;
    height: 44px;
    font-size: 16px;
  }
  .tabs::before {
    content: '';
    width: 5px;
    border-top: 1px solid #888;
  }
  .tabs span {
    flex: 1;
    border-top: 1px solid #888;
  }
  .tabs .back {
    height: 33px;
    width: 80px;
    padding-right: 3px;
    border-top: 1px solid #888;
    border-bottom: 2px solid #808080;
    border-left: 1px solid #fff;
  }
  .tabs .front {
    height: 37px;
    width: 68px;
    padding: 3px 14px 0 0;
    border-left: 2px solid #fff;
    border-right: 2px solid #707070;
    border-bottom: 2px solid #707070;
    border-radius: 0 0 3px 0;
  }
  .details {
    flex: 1;
    background: #fff;
  }
  table {
    width: 100%;
    border-collapse: collapse;
    table-layout: fixed;
    font-size: 16px;
    line-height: 24px;
  }
  .c-fold {
    width: 22px;
  }
  .c-name {
    width: 111px;
  }
  tr {
    height: 31px;
  }
  tr:nth-child(even) {
    height: 32px;
  }
  th, td {
    padding: 0 4px 3px;
    border: 1px solid #a0a0a0;
    text-align: left;
    font-weight: normal;
    white-space: nowrap;
  }
  th.group {
    font-weight: bold;
  }
  td.fixed {
    background: #e8e6e1;
  }
  td.gutter {
    padding: 0 0 0 3px;
    border-width: 0 1px 0 0;
  }
  .gutter .fold {
    display: block;
    width: 14px;
    height: 14px;
    background-size: 8px 2px;
  }

  /* viewport */
  .graphics {
    display: flex;
    flex: 1;
    flex-direction: column;
  }
  .graphics h2 {
    background: linear-gradient(90deg, #99b3d2, #b6cee8);
  }
  .view {
    position: relative;
    flex: 1;
    overflow: hidden;
    background: linear-gradient(#6a8bdf, #f3f6fe);
  }
  .scene {
    position: absolute;
    width: 100%;
    height: 100%;
  }
  .axis {
    fill: none;
    stroke: #000;
    stroke-width: 3;
    stroke-dasharray: 3 4;
  }
  .scale {
    font: 15px 'Liberation Sans', sans-serif;
    stroke: #111;
    stroke-width: 0.5;
  }
  .watermark {
    position: absolute;
    right: 4px;
    bottom: 18px;
    color: rgba(226, 228, 234, 0.9);
    font: 300 44px/44px 'Noto Sans CJK SC', sans-serif;
    text-shadow: 1px 1px 1px #888, -1px -1px 0 #fff;
    white-space: nowrap;
  }
  .watermark span {
    font-size: 43px;
  }

  /* popup menu */
  .context {
    position: absolute;
    left: 1587px;
    top: 51px;
    display: flex;
    flex-direction: column;
    width: 389px;
    padding: 2px 3px;
    box-sizing: border-box;
    border: 1px solid #979797;
    background: #f0f0f0;
    box-shadow: 4px 4px 4px rgba(0, 0, 0, 0.5);
  }
  .context button {
    display: flex;
    align-items: stretch;
    height: 30px;
    text-align: left;
    line-height: 28px;
  }
  .cell {
    display: flex;
    align-items: center;
    justify-content: center;
    width: 30px;
    margin-right: 2px;
    box-sizing: border-box;
  }
  .caption {
    flex: 1;
    padding-left: 3px;
  }
  .more {
    width: 7px;
    height: 18px;
    margin: 6px 11px 0 0;
  }
  .hot .cell {
    border: 1px solid #fff;
    border-right-color: #a0a0a0;
    border-bottom-color: #a0a0a0;
  }
  .hot .caption {
    background: #0078d7;
    color: #fff;
  }
  .context hr {
    width: auto;
    height: 1px;
    margin: 6px 2px;
    border: 0;
    border-top: 1px solid #a0a0a0;
    background: #fff;
  }
  .context hr.tight {
    margin: 4px 2px 3px;
  }
</style>
